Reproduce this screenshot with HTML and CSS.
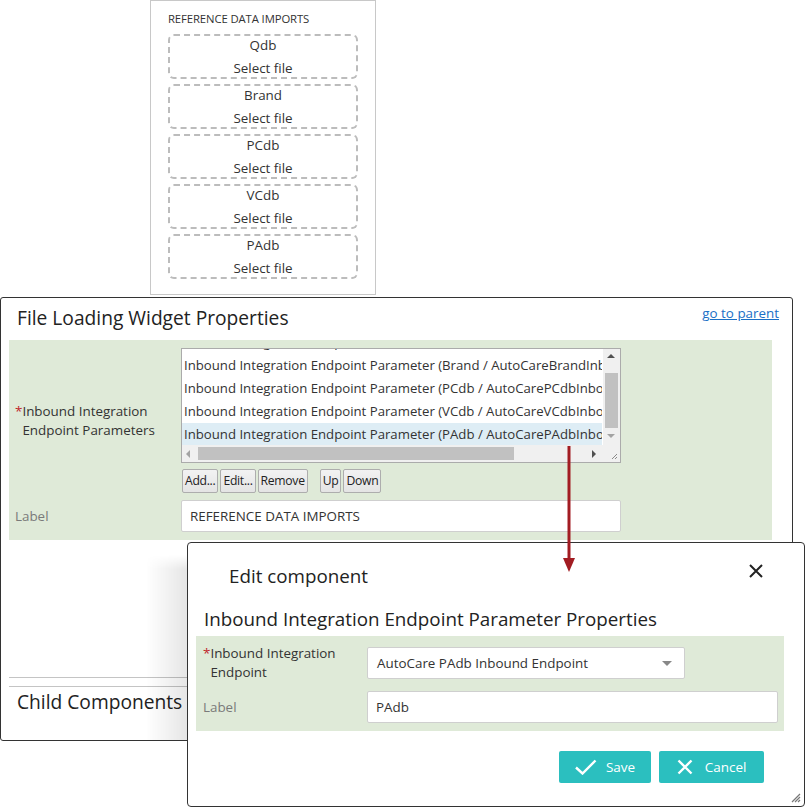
FILE: index.html
```html
<!DOCTYPE html>
<html>
<head>
<meta charset="utf-8">
<link rel="stylesheet" href="styles.css">
</head>
<body>
<div class="page">
  <div class="import-card">
    <div class="import-title">REFERENCE DATA IMPORTS</div>
    <div class="drop-list">
      <div class="drop"><span class="drop-name">Qdb</span><span class="drop-action">Select file</span></div>
      <div class="drop"><span class="drop-name">Brand</span><span class="drop-action">Select file</span></div>
      <div class="drop"><span class="drop-name">PCdb</span><span class="drop-action">Select file</span></div>
      <div class="drop"><span class="drop-name">VCdb</span><span class="drop-action">Select file</span></div>
      <div class="drop"><span class="drop-name">PAdb</span><span class="drop-action">Select file</span></div>
    </div>
  </div>

  <div class="panel">
    <div class="panel-head">
      <div class="panel-title">File Loading Widget Properties</div>
      <a class="parent-link" href="#">go to parent</a>
    </div>
    <div class="form">
      <div class="row">
        <div class="label req"><span class="star">*</span><span class="label-text">Inbound Integration Endpoint Parameters</span></div>
        <div class="field">
          <div class="listbox">
            <div class="list-rows">
              <div class="list-row">Inbound Integration Endpoint Parameter (Qdb / AutoCareQdbInboundEndpoint)</div>
              <div class="list-row">Inbound Integration Endpoint Parameter (Brand / AutoCareBrandInboundEndpoint)</div>
              <div class="list-row">Inbound Integration Endpoint Parameter (PCdb / AutoCarePCdbInboundEndpoint)</div>
              <div class="list-row">Inbound Integration Endpoint Parameter (VCdb / AutoCareVCdbInboundEndpoint)</div>
              <div class="list-row selected">Inbound Integration Endpoint Parameter (PAdb / AutoCarePAdbInboundEndpoint)</div>
            </div>
            <div class="vscroll">
              <span class="arrow up"></span>
              <span class="vthumb"></span>
              <span class="arrow down"></span>
            </div>
            <div class="hscroll">
              <span class="arrow left"></span>
              <span class="hthumb"></span>
              <span class="arrow right"></span>
            </div>
            <div class="corner">
              <svg width="17" height="17" viewBox="0 0 17 17"><path d="M14 9 L9 14 M14 12 L12 14" stroke="#8a8a8a" stroke-width="1" fill="none"/></svg>
            </div>
          </div>
          <div class="list-buttons">
            <button class="btn">Add...</button>
            <button class="btn">Edit...</button>
            <button class="btn">Remove</button>
            <button class="btn spaced">Up</button>
            <button class="btn">Down</button>
          </div>
        </div>
      </div>
      <div class="row">
        <div class="label muted">Label</div>
        <div class="field">
          <div class="text-input wide">REFERENCE DATA IMPORTS</div>
        </div>
      </div>
    </div>
    <div class="rule"></div>
    <div class="rule second"></div>
    <div class="panel-title">Child Components</div>
    <div class="shade"></div>
  </div>

  <svg class="link-arrow" width="20" height="130" viewBox="0 0 20 130">
    <line x1="9" y1="0" x2="9" y2="116" stroke="#a21c22" stroke-width="3"/>
    <polygon points="3,112 15,112 9,126" fill="#a21c22"/>
  </svg>

  <div class="modal">
    <div class="modal-head">Edit component</div>
    <button class="close" aria-label="Close">
      <svg width="16" height="16" viewBox="0 0 16 16"><path d="M2 2 L14 14 M14 2 L2 14" stroke="#222" stroke-width="2" fill="none"/></svg>
    </button>
    <div class="modal-title">Inbound Integration Endpoint Parameter Properties</div>
    <div class="form modal-form">
      <div class="row">
        <div class="label req tight"><span class="star">*</span><span class="label-text">Inbound Integration Endpoint</span></div>
        <div class="field">
          <div class="select">AutoCare PAdb Inbound Endpoint<span class="caret"></span></div>
        </div>
      </div>
      <div class="row">
        <div class="label muted">Label</div>
        <div class="field">
          <div class="text-input full">PAdb</div>
        </div>
      </div>
    </div>
    <div class="modal-actions">
      <button class="action save">
        <svg width="22" height="16" viewBox="0 0 22 16"><path d="M1 8.5 L7.5 14.5 L20.5 1.5" stroke="#fff" stroke-width="2.4" fill="none"/></svg>
        <span>Save</span>
      </button>
      <button class="action cancel">
        <svg width="16" height="16" viewBox="0 0 16 16"><path d="M1.5 1.5 L14.5 14.5 M14.5 1.5 L1.5 14.5" stroke="#fff" stroke-width="2.4" fill="none"/></svg>
        <span>Cancel</span>
      </button>
    </div>
    <div class="grip">
      <svg width="12" height="12" viewBox="0 0 12 12"><path d="M11 3 L3 11 M11 6 L6 11 M11 9 L9 11" stroke="#777" stroke-width="1.2" fill="none"/></svg>
    </div>
  </div>
</div>
</body>
</html>
```

FILE: styles.css
```css
* { box-sizing: border-box; }
html, body { margin: 0; padding: 0; background: #fff; }
body {
  font-family: "Open Sans", "Noto Sans", sans-serif;
  font-size: 13.4px;
  color: #333;
  width: 805px;
  height: 807px;
  overflow: hidden;
}
.page { position: relative; width: 805px; height: 807px; }

/* top card */
.import-card {
  margin-left: 150px;
  width: 226px;
  height: 295px;
  border: 1px solid #c8c8c8;
  padding: 10px 0 0 17px;
}
.import-title {
  font-size: 11.3px;
  line-height: 16px;
  color: #333;
  letter-spacing: -0.1px;
}
.drop-list {
  margin-top: 7px;
  display: flex;
  flex-direction: column;
  gap: 5px;
  width: 190px;
}
.drop {
  height: 45px;
  border: 2px dashed #bcbcbc;
  border-radius: 6px;
  display: flex;
  flex-direction: column;
  align-items: center;
}
.drop-name { line-height: 20px; margin-top: -1px; }
.drop-action { line-height: 20px; margin-top: 3px; }

/* main panel */
.panel {
  position: relative;
  margin-top: 2px;
  width: 793px;
  height: 444px;
  border: 1px solid #333;
  border-radius: 3px;
  padding-top: 6px;
}
.panel-head {
  display: flex;
  justify-content: space-between;
  align-items: flex-start;
  padding-right: 13px;
  margin-bottom: 8px;
}
.panel-title {
  font-size: 19.2px;
  line-height: 28px;
  padding-left: 16px;
  color: #222;
}
.parent-link {
  font-size: 13.4px;
  color: #1a6fc6;
  line-height: 18px;
  margin-top: 0;
}
.form {
  background: #dfead8;
  margin: 0 20px 0 8px;
  padding: 8px 0 8px 6px;
  display: flex;
  flex-direction: column;
  gap: 7px;
}
.row { display: flex; align-items: center; }
.label {
  width: 166px;
  flex: none;
  line-height: 19px;
  color: #333;
}
.label.req { display: flex; }
.label-text { width: 150px; }
.label.tight { margin: -4px 0; }
.star { color: #c0262c; }
.label.muted { color: #7a7a7a; }
.field { flex: none; }

.listbox {
  position: relative;
  width: 440px;
  height: 115px;
  border: 1px solid #ababab;
  background: #fff;
  overflow: hidden;
}
.list-rows {
  position: absolute;
  left: 0; top: 0;
  width: 420px;
  height: 96px;
  overflow: hidden;
}
.list-row {
  height: 23px;
  line-height: 23px;
  padding-left: 2px;
  white-space: nowrap;
  color: #333;
  font-size: 13.2px;
}
.list-row:first-child { margin-top: -18px; }
.list-row.selected { background: #deedf5; }
.vscroll {
  position: absolute;
  right: 0; top: 0;
  width: 17px;
  height: 96px;
  background: #f0f0f0;
}
.vthumb {
  position: absolute;
  left: 2px; top: 24px;
  width: 13px; height: 55px;
  background: #c1c1c1;
}
.arrow { position: absolute; width: 0; height: 0; }
.arrow.up { left: 4px; top: 5px; border-left: 4px solid transparent; border-right: 4px solid transparent; border-bottom: 4px solid #505050; }
.arrow.down { left: 4px; top: 85px; border-left: 4px solid transparent; border-right: 4px solid transparent; border-top: 4px solid #a3a3a3; }
.hscroll {
  position: absolute;
  left: 0; bottom: 0;
  width: 421px;
  height: 17px;
  background: #f0f0f0;
}
.hthumb {
  position: absolute;
  left: 16px; top: 2px;
  width: 316px; height: 13px;
  background: #c1c1c1;
}
.arrow.left { left: 4px; top: 5px; border-top: 4px solid transparent; border-bottom: 4px solid transparent; border-right: 4px solid #a3a3a3; }
.arrow.right { left: 410px; top: 5px; border-top: 4px solid transparent; border-bottom: 4px solid transparent; border-left: 4px solid #505050; }
.corner {
  position: absolute;
  right: 0; bottom: 0;
  width: 17px; height: 17px;
  background: #f0f0f0;
}
.corner svg { display: block; }

.list-buttons {
  margin-top: 6px;
  display: flex;
  gap: 2px;
  padding-left: 1px;
}
.btn {
  height: 24px;
  padding: 0 2px;
  font-family: inherit;
  font-size: 12.2px;
  color: #222;
  background: linear-gradient(#f2f2f2, #e4e4e4);
  border: 1px solid #adadad;
  border-radius: 2px;
  line-height: 20px;
  letter-spacing: -0.3px;
}
.btn.spaced { margin-left: 10px; }

.text-input {
  height: 32px;
  line-height: 30px;
  border: 1px solid #cfcfcf;
  background: #fff;
  padding-left: 8px;
  border-radius: 2px;
}
.text-input.wide { width: 440px; }

.rule {
  margin: 137px 20px 0 8px;
  height: 1px;
  background: #c4c4c4;
}
.rule.second { margin-top: 8px; margin-bottom: 1px; }

.shade {
  position: absolute;
  left: 145px;
  top: 257px;
  width: 42px;
  height: 185px;
  background: linear-gradient(to right, rgba(0,0,0,0), rgba(0,0,0,0.1));
  -webkit-mask-image: linear-gradient(to bottom, transparent, #000 14px);
  mask-image: linear-gradient(to bottom, transparent, #000 14px);
}

.link-arrow {
  position: absolute;
  left: 560px;
  top: 446px;
  z-index: 3;
}

/* modal */
.modal {
  position: absolute;
  left: 187px;
  top: 542px;
  width: 618px;
  height: 265px;
  border: 1px solid #333;
  border-radius: 4px;
  background: #fff;
  z-index: 2;
  padding-top: 19px;
}
.modal-head {
  font-size: 18.8px;
  line-height: 28px;
  padding-left: 41px;
  color: #222;
}
.close {
  position: absolute;
  left: 560px;
  top: 20px;
  width: 16px; height: 16px;
  padding: 0;
  border: 0;
  background: none;
}
.close svg { display: block; }
.modal-title {
  margin-top: 15px;
  font-size: 18.8px;
  line-height: 28px;
  padding-left: 16px;
  color: #222;
}
.modal-form {
  margin: 3px 20px 0 8px;
  padding: 11px 0 8px 7px;
  gap: 12px;
}
.modal-form .label { width: 164px; }
.modal-form .label-text { width: 140px; }
.select {
  position: relative;
  width: 318px;
  height: 32px;
  line-height: 30px;
  border: 1px solid #cfcfcf;
  background: #fff;
  padding-left: 9px;
  border-radius: 2px;
}
.caret {
  position: absolute;
  right: 12px;
  top: 13px;
  border-left: 5px solid transparent;
  border-right: 5px solid transparent;
  border-top: 5px solid #888;
}
.text-input.full { width: 411px; }
.modal-actions {
  margin-top: 20px;
  display: flex;
  justify-content: flex-end;
  gap: 8px;
  padding-right: 40px;
}
.action {
  height: 32px;
  border: 0;
  border-radius: 2px;
  background: #2bbfbf;
  color: #fff;
  font-family: inherit;
  font-size: 13.5px;
  display: flex;
  align-items: center;
  justify-content: center;
  gap: 9px;
  padding: 0;
}
.action svg { display: block; }
.action.save { width: 92px; }
.action.cancel { width: 105px; gap: 12px; }
.grip {
  position: absolute;
  right: 3px;
  bottom: 3px;
  width: 12px; height: 12px;
}
.grip svg { display: block; }
```
